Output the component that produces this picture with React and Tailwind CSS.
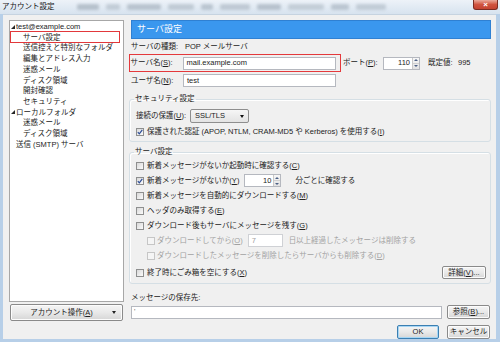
import React from "react"

function Check({ checked = false, disabled = false }) {
  return (
    <span
      className={
        disabled
          ? "w-[8px] h-[8px] shrink-0 border border-[#c6c6c6] bg-[#f5f5f5] flex items-center justify-center"
          : "w-[8px] h-[8px] shrink-0 border border-[#8e8f8f] bg-gradient-to-br from-[#d9d9d9] to-[#fbfbfb] flex items-center justify-center"
      }
    >
      {checked && (
        <svg width="6" height="6" viewBox="0 0 6 6">
          <path d="M0.8 3.2 L2.3 4.8 L5.3 0.9" fill="none" stroke="#2b4b96" strokeWidth="1.2" />
        </svg>
      )}
    </span>
  )
}

function Spinner() {
  return (
    <div className="w-[7px] h-full flex flex-col border-l border-[#c9c9c9] bg-gradient-to-b from-[#f7f7f7] to-[#e2e2e2]">
      <div className="flex-1 flex items-center justify-center border-b border-[#d0d0d0]">
        <svg width="4" height="2" viewBox="0 0 4 2">
          <path d="M0 2 L2 0 L4 2 Z" fill="#4d6185" />
        </svg>
      </div>
      <div className="flex-1 flex items-center justify-center">
        <svg width="4" height="2" viewBox="0 0 4 2">
          <path d="M0 0 L4 0 L2 2 Z" fill="#4d6185" />
        </svg>
      </div>
    </div>
  )
}

function Button({ children, className = "", primary = false }) {
  return (
    <div
      className={`h-full flex items-center justify-center rounded-[2px] border bg-gradient-to-b from-[#f5f5f5] via-[#e9e9e9] to-[#d6d6d6] ${
        primary ? "border-[#3c7fb1] shadow-[inset_0_0_0_1px_#a6d6f5]" : "border-[#8a8a8a] shadow-[inset_0_0_0_1px_#fcfcfc]"
      } ${className}`}
    >
      {children}
    </div>
  )
}

function TreeRow({ children, level = 0, open = false, selected = false }) {
  return (
    <div
      className={`relative h-[10.7px] flex items-center ${
        level === 1 ? "pl-[13px]" : open ? "pl-[1px]" : "pl-[6px]"
      }`}
    >
      {open && (
        <svg width="4" height="4" viewBox="0 0 4 4" className="mr-[1px]">
          <path d="M4 0 L4 4 L0 4 Z" fill="#262626" />
        </svg>
      )}
      <span>{children}</span>
      {selected && (
        <div className="absolute left-0 -top-[1.5px] w-[110px] h-[12.5px] border-[1.5px] border-[#e2383b]" />
      )}
    </div>
  )
}

function TitleBar() {
  const blobs = [
    "w-[22px] bg-[#a3afbb]",
    "w-[14px] bg-[#b5c0cb]",
    "w-[34px] bg-[#a7b3bf]",
    "w-[26px] bg-[#b2bdc8]",
    "w-[12px] bg-[#a9b5c1]",
    "w-[30px] bg-[#b0bbc6]",
    "w-[24px] bg-[#a5b1bd]",
    "w-[36px] bg-[#b7c2cc]",
    "w-[18px] bg-[#aab6c2]",
    "w-[30px] bg-[#b4bfca]",
  ]
  return (
    <div className="h-[14px] flex items-start bg-gradient-to-b from-[#edf2f8] to-[#d7e3ef] overflow-hidden">
      <span className="pl-[2px] pt-[3px] text-[7.5px] text-[#151515]">アカウント設定</span>
      <div className="flex items-center gap-[7px] ml-[22px] mt-[4px] blur-[1.5px] opacity-70">
        {blobs.map((b, i) => (
          <span key={i} className={`h-[6px] rounded-[2px] ${b}`} />
        ))}
      </div>
      <div className="ml-auto mr-[2px] w-[25px] h-[10px] rounded-b-[3px] border border-t-0 border-[#7b2c22] bg-gradient-to-b from-[#e9a99b] via-[#d0533f] to-[#c44331] flex items-center justify-center">
        <span className="text-white text-[8px] font-bold leading-none">×</span>
      </div>
    </div>
  )
}

export default function App() {
  return (
    <div className="w-[500px] h-[342px] flex flex-col bg-[#b7cfe8] font-['Liberation_Sans','Noto_Sans_CJK_JP',sans-serif] text-[7.5px] leading-none text-[#222] whitespace-nowrap overflow-hidden">
      <TitleBar />
      <div className="flex-1 ml-[3px] mr-[4px] mb-[3px] bg-[#f0f0f0] border-t border-[#c6d3e0] flex gap-[7px] pl-[6px] pt-[5px] pr-[5px]">
        {/* left: account tree */}
        <div className="w-[115px] flex flex-col">
          <div className="h-[282px] bg-white border border-[#a7a7a7] pt-[0.5px]">
            <TreeRow open>test@example.com</TreeRow>
            <TreeRow level={1} selected>サーバ設定</TreeRow>
            <TreeRow level={1}>送信控えと特別なフォルダ</TreeRow>
            <TreeRow level={1}>編集とアドレス入力</TreeRow>
            <TreeRow level={1}>迷惑メール</TreeRow>
            <TreeRow level={1}>ディスク領域</TreeRow>
            <TreeRow level={1}>開封確認</TreeRow>
            <TreeRow level={1}>セキュリティ</TreeRow>
            <TreeRow open>ローカルフォルダ</TreeRow>
            <TreeRow level={1}>迷惑メール</TreeRow>
            <TreeRow level={1}>ディスク領域</TreeRow>
            <TreeRow>送信 (SMTP) サーバ</TreeRow>
          </div>
          <div className="mt-[2px] ml-[1px] w-[113px] h-[17px]">
            <Button>
              <span className="flex-1 text-center">アカウント操作(<u>A</u>)</span>
              <svg width="4" height="3" viewBox="0 0 4 3" className="mr-[6px]">
                <path d="M0 0 L4 0 L2 3 Z" fill="#222" />
              </svg>
            </Button>
          </div>
        </div>

        {/* right: server settings */}
        <div className="w-[360px] flex flex-col">
          <div className="h-[19px] bg-[#3a97ee] border border-[#2f80d2] flex items-center pl-[5px] text-white text-[9px]">
            サーバ設定
          </div>

          <div className="mt-[3px] h-[10px] flex items-center">
            <span className="w-[54px]">サーバの種類:</span>
            <span>POP メールサーバ</span>
          </div>

          <div className="mt-[2px] h-[18px] flex items-center">
            <div className="-ml-[2px] w-[212px] h-full border-[1.5px] border-[#e4393c] flex items-center pl-[0.5px]">
              <span className="w-[52px]">
                サーバ名(<u>S</u>):
              </span>
              <div className="w-[153px] h-[13px] bg-white border border-[#b5b8bf] flex items-center pl-[3px]">
                mail.example.com
              </div>
            </div>
            <span className="ml-[2px] w-[40px]">
              ポート(<u>P</u>):
            </span>
            <div className="w-[37px] h-[13px] bg-white border border-[#b5b8bf] flex items-center">
              <span className="flex-1 text-right pr-[2px]">110</span>
              <Spinner />
            </div>
            <span className="ml-[8px] w-[30px]">既定値:</span>
            <span>995</span>
          </div>

          <div className="mt-[2px] h-[13px] flex items-center">
            <span className="w-[52px]">
              ユーザ名(<u>N</u>):
            </span>
            <div className="w-[153px] h-full bg-white border border-[#b5b8bf] flex items-center pl-[3px]">test</div>
          </div>

          <fieldset className="mt-[7px] -ml-[2px] border border-[#d5dfe5] rounded-[3px] shadow-[inset_1px_1px_0_#fff] px-[6px] pb-[4px]">
            <legend className="-ml-[2px] px-[1px] h-[10px] leading-[10px]">セキュリティ設定</legend>
            <div className="mt-[5px] h-[14px] flex items-center">
              <span className="w-[54px]">
                接続の保護(<u>U</u>):
              </span>
              <div className="w-[59px] h-full rounded-[2px] border border-[#8e8e8e] bg-gradient-to-b from-[#f6f6f6] to-[#e3e3e3] flex items-center pl-[4px] pr-[4px]">
                <span className="flex-1">SSL/TLS</span>
                <svg width="4" height="3" viewBox="0 0 4 3">
                  <path d="M0 0 L4 0 L2 3 Z" fill="#111" />
                </svg>
              </div>
            </div>
            <div className="mt-[4px] h-[10px] flex items-center gap-[3px]">
              <Check checked />
              <span>
                保護された認証 (APOP, NTLM, CRAM-MD5 や Kerberos) を使用する(<u>I</u>)
              </span>
            </div>
          </fieldset>

          <fieldset className="mt-[5px] -ml-[2px] border border-[#d5dfe5] rounded-[3px] shadow-[inset_1px_1px_0_#fff] px-[6px] pb-[3px]">
            <legend className="-ml-[2px] px-[1px] h-[10px] leading-[10px]">サーバ設定</legend>
            <div className="mt-[1px] h-[15px] flex items-center gap-[3px]">
              <Check />
              <span>
                新着メッセージがないか起動時に確認する(<u>C</u>)
              </span>
            </div>
            <div className="h-[15px] flex items-center">
              <Check checked />
              <span className="ml-[3px]">
                新着メッセージがないか(<u>Y</u>)
              </span>
              <div className="ml-[5px] w-[37px] h-[13px] bg-white border border-[#b5b8bf] flex items-center">
                <span className="flex-1 text-right pr-[2px]">10</span>
                <Spinner />
              </div>
              <span className="ml-[14px]">分ごとに確認する</span>
            </div>
            <div className="h-[15px] flex items-center gap-[3px]">
              <Check />
              <span>
                新着メッセージを自動的にダウンロードする(<u>M</u>)
              </span>
            </div>
            <div className="h-[15px] flex items-center gap-[3px]">
              <Check />
              <span>
                ヘッダのみ取得する(<u>E</u>)
              </span>
            </div>
            <div className="h-[15px] flex items-center gap-[3px]">
              <Check />
              <span>
                ダウンロード後もサーバにメッセージを残す(<u>G</u>)
              </span>
            </div>
            <div className="h-[15px] flex items-center pl-[11px] text-[#a2a2a2]">
              <Check disabled />
              <span className="ml-[2px]">
                ダウンロードしてから(<u>O</u>)
              </span>
              <div className="ml-[5px] w-[35px] h-[13px] bg-white border border-[#cfd1d5] flex items-center pl-[3px]">7</div>
              <span className="ml-[6px]">日以上経過したメッセージは削除する</span>
            </div>
            <div className="h-[15px] flex items-center gap-[2px] pl-[11px] text-[#a2a2a2]">
              <Check disabled />
              <span>
                ダウンロードしたメッセージを削除したらサーバからも削除する(<u>D</u>)
              </span>
            </div>
            <div className="mt-[2px] h-[15px] flex items-center gap-[3px]">
              <Check />
              <span>
                終了時にごみ箱を空にする(<u>X</u>)
              </span>
              <div className="ml-auto mr-[-2px] w-[44px] h-[13px]">
                <Button>
                  詳細(<u>V</u>)...
                </Button>
              </div>
            </div>
          </fieldset>

          <div className="mt-[9px] h-[10px] flex items-center">メッセージの保存先:</div>

          <div className="mt-[2px] h-[14px] flex items-center">
            <div className="w-[311px] h-[13px] bg-white border border-[#b5b8bf] flex items-center pl-[2px] text-[#666]">'</div>
            <div className="ml-[5px] w-[43px] h-full">
              <Button>
                参照(<u>B</u>)...
              </Button>
            </div>
          </div>

          <div className="mt-[6px] h-[14px] flex justify-end gap-[8px] pr-[1px]">
            <div className="w-[42px] h-full">
              <Button primary>OK</Button>
            </div>
            <div className="w-[43px] h-full">
              <Button>キャンセル</Button>
            </div>
          </div>
        </div>
      </div>
    </div>
  )
}
